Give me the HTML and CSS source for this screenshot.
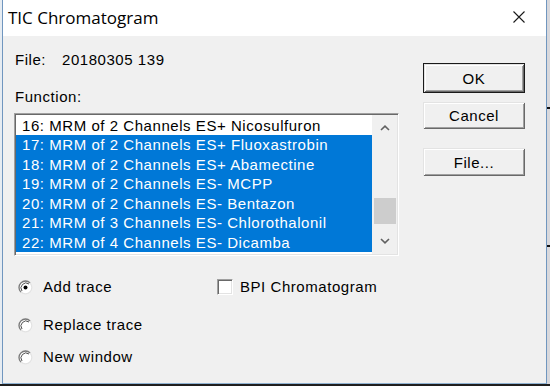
FILE: index.html
```html
<!DOCTYPE html>
<html>
<head>
<meta charset="utf-8">
<title>TIC Chromatogram</title>
<link rel="stylesheet" href="styles.css">
</head>
<body>
<div class="window">
  <div class="titlebar">
    <span class="title">TIC Chromatogram</span>
    <svg class="close" width="12" height="12" viewBox="0 0 12 12"><path d="M0.5 0.5L11.5 11.5M11.5 0.5L0.5 11.5" stroke="#1a1a1a" stroke-width="1.1" fill="none"/></svg>
  </div>
  <div class="client">
    <div class="main">
      <div class="file-row"><span class="file-label">File:</span><span>20180305 139</span></div>
      <div class="func-label">Function:</div>
      <div class="listbox">
        <ul class="items">
          <li>16: MRM of 2 Channels ES+ Nicosulfuron</li>
          <li class="sel">17: MRM of 2 Channels ES+ Fluoxastrobin</li>
          <li class="sel">18: MRM of 2 Channels ES+ Abamectine</li>
          <li class="sel">19: MRM of 2 Channels ES- MCPP</li>
          <li class="sel">20: MRM of 2 Channels ES- Bentazon</li>
          <li class="sel">21: MRM of 3 Channels ES- Chlorothalonil</li>
          <li class="sel">22: MRM of 4 Channels ES- Dicamba</li>
        </ul>
        <div class="vscroll">
          <div class="arrow"><svg width="10" height="6" viewBox="0 0 10 6"><path d="M1 5L5 1.2L9 5" stroke="#606060" stroke-width="1.6" fill="none"/></svg></div>
          <div class="track"><div class="thumb"></div></div>
          <div class="arrow"><svg width="10" height="6" viewBox="0 0 10 6"><path d="M1 1L5 4.8L9 1" stroke="#606060" stroke-width="1.6" fill="none"/></svg></div>
        </div>
      </div>
      <div class="options">
        <label class="opt">
          <svg class="radio" width="15" height="15" viewBox="0 0 15 15"><circle cx="7.5" cy="7.5" r="6.3" fill="#fff" stroke="#e3e3e3" stroke-width="1.2"/><path d="M2.9 12.1A6.5 6.5 0 0 1 12.1 2.9" stroke="#7a7a7a" stroke-width="1.3" fill="none"/><path d="M4 11A5 5 0 0 1 11 4" stroke="#3c3c3c" stroke-width="0.9" fill="none"/><circle cx="7.5" cy="7.5" r="2" fill="#000"/></svg>
          <span>Add trace</span>
        </label>
        <label class="opt check">
          <span class="checkbox"></span>
          <span>BPI Chromatogram</span>
        </label>
        <label class="opt r2">
          <svg class="radio" width="15" height="15" viewBox="0 0 15 15"><circle cx="7.5" cy="7.5" r="6.3" fill="#fff" stroke="#e3e3e3" stroke-width="1.2"/><path d="M2.9 12.1A6.5 6.5 0 0 1 12.1 2.9" stroke="#7a7a7a" stroke-width="1.3" fill="none"/><path d="M4 11A5 5 0 0 1 11 4" stroke="#3c3c3c" stroke-width="0.9" fill="none"/></svg>
          <span>Replace trace</span>
        </label>
        <label class="opt r3">
          <svg class="radio" width="15" height="15" viewBox="0 0 15 15"><circle cx="7.5" cy="7.5" r="6.3" fill="#fff" stroke="#e3e3e3" stroke-width="1.2"/><path d="M2.9 12.1A6.5 6.5 0 0 1 12.1 2.9" stroke="#7a7a7a" stroke-width="1.3" fill="none"/><path d="M4 11A5 5 0 0 1 11 4" stroke="#3c3c3c" stroke-width="0.9" fill="none"/></svg>
          <span>New window</span>
        </label>
      </div>
    </div>
    <div class="buttons">
      <button class="btn ok">OK</button>
      <button class="btn cancel">Cancel</button>
      <button class="btn file">File...</button>
    </div>
  </div>
</div>
</body>
</html>
```
FILE: styles.css
```css
html, body {
  margin: 0;
  padding: 0;
}
body {
  width: 550px;
  height: 386px;
  overflow: hidden;
  font-family: "Liberation Sans", Arial, sans-serif;
  font-size: 15px;
  letter-spacing: 0.55px;
  color: #000;
  background:
    linear-gradient(#111, #111) 547px 107px / 3px 2px no-repeat,
    linear-gradient(#111, #111) 547px 245px / 3px 2px no-repeat,
    linear-gradient(to bottom, transparent 384px, #1f1f1f 384px),
    linear-gradient(to right, #e6ecf2 2px, #f4f4f4 2px, #f4f4f4 547px, #d8d8dc 547px);
}
.window {
  margin-left: 2px;
  width: 543px;
  height: 383px;
  border-left: 1px solid #7096bf;
  border-right: 1px solid #7096bf;
  border-bottom: 1px solid #8fb2d2;
  display: flex;
  flex-direction: column;
}
.titlebar {
  height: 36px;
  flex: none;
  background: #fff;
  display: flex;
  align-items: center;
  justify-content: space-between;
  padding: 0 21px 0 5px;
}
.title {
  font-family: "Open Sans", "Noto Sans", sans-serif;
  font-size: 17px;
  letter-spacing: 0;
  line-height: 36px;
  color: #000;
}
.close {
  margin-bottom: 3px;
}
.client {
  flex: 1;
  background: #f0f0f0;
  display: flex;
  gap: 24px;
  padding: 15px 21px 0 11px;
}
.main {
  width: 385px;
  flex: none;
}
.file-row {
  display: flex;
  line-height: 18px;
  padding-left: 1px;
}
.file-label {
  width: 47px;
}
.func-label {
  margin-top: 19px;
  line-height: 18px;
  padding-left: 1px;
}
.listbox {
  margin-top: 7px;
  height: 143px;
  box-sizing: border-box;
  border: 1px solid;
  border-color: #a0a0a0 #ffffff #ffffff #a0a0a0;
  padding: 1px;
  box-shadow: inset 1px 1px #696969, inset -1px -1px #e3e3e3;
  background: #fff;
  display: flex;
}
.items {
  flex: 1;
  margin: 0;
  padding: 0;
  list-style: none;
  overflow: hidden;
}
.items li {
  height: 19.5px;
  box-sizing: border-box;
  padding: 1.5px 0 0 6px;
  line-height: 18px;
  white-space: nowrap;
}
.items li.sel {
  background: #0078d7;
  color: #fff;
}
.vscroll {
  width: 25px;
  flex: none;
  background: #f0f0f0;
  display: flex;
  flex-direction: column;
}
.arrow {
  height: 26px;
  display: flex;
  align-items: center;
  justify-content: center;
}
.track {
  flex: 1;
}
.thumb {
  margin: 57px 1px 0 2px;
  height: 26px;
  background: #cdcdcd;
}
.options {
  margin-top: 22px;
  display: grid;
  grid-template-columns: 203px auto;
}
.opt {
  display: flex;
  align-items: center;
  line-height: 18px;
}
.radio {
  margin: 0 10px 0 4px;
  flex: none;
}
.checkbox {
  width: 16px;
  height: 16px;
  box-sizing: border-box;
  border: 1px solid;
  border-color: #a0a0a0 #ffffff #ffffff #a0a0a0;
  box-shadow: inset 1px 1px #696969, inset -1px -1px #e3e3e3;
  background: #fff;
  margin-right: 7px;
}
.r2 {
  grid-column: 1;
  margin-top: 20px;
}
.r3 {
  grid-column: 1;
  margin-top: 14px;
}
.buttons {
  width: 102px;
  flex: none;
  display: flex;
  flex-direction: column;
  padding-top: 12px;
}
.btn {
  font: inherit;
  letter-spacing: inherit;
  color: #000;
  background: #f0f0f0;
  box-sizing: border-box;
  width: 102px;
  padding: 0;
  margin: 0;
  border: none;
  box-shadow: inset 1px 1px #e3e3e3, inset -1px -1px #696969, inset 2px 2px #fff, inset -2px -2px #a0a0a0;
}
.ok {
  height: 30px;
  border: 1px solid #1a1a1a;
}
.cancel {
  height: 27px;
  margin-top: 9px;
}
.file {
  height: 28px;
  margin-top: 19px;
}
```
